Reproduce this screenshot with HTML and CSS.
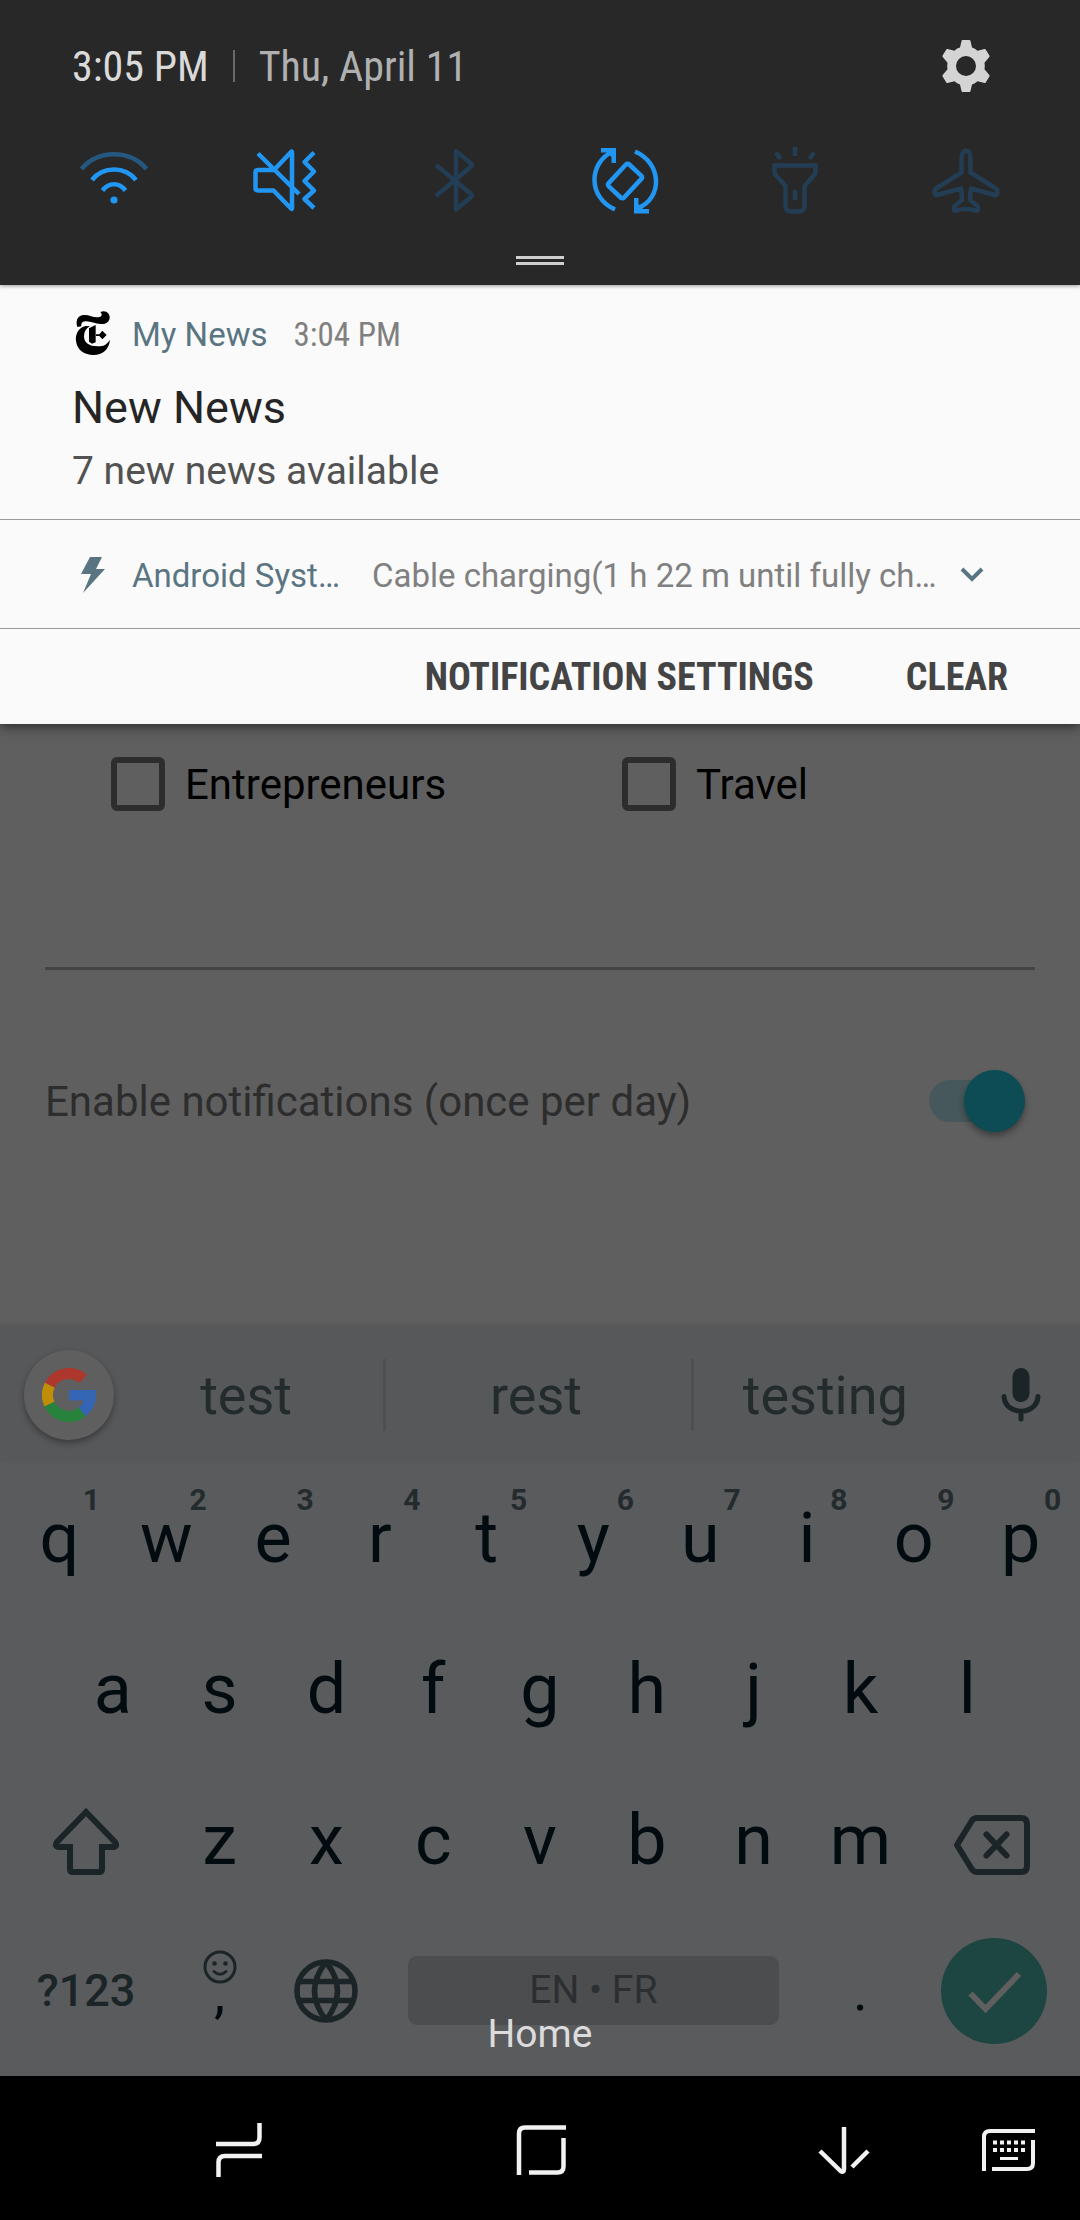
FILE: index.html
```html
<!DOCTYPE html>
<html lang="en">
<head>
<meta charset="utf-8">
<meta name="viewport" content="width=device-width, initial-scale=1">
<title>Notifications</title>
<link rel="stylesheet" href="styles.css">
</head>
<body>
<div class="screen">
  <section class="shade">
    <header class="quick-panel">
      <div class="status-row">
        <span class="clock">3:05 PM</span>
        <span class="status-divider"></span>
        <span class="date">Thu, April 11</span>
        <button class="gear" type="button" aria-label="Settings">
          <svg width="56" height="56" viewBox="0 0 56 56"><path fill="#d4d4d4" fill-rule="evenodd" d="M24.500 2h7q.8 0 1 1l1.500 6.500q3 1 5.500 3.200l7-1.700q.8-.2 1.200.5l3.700 6q.5.900-.1 1.600l-4.800 5.600q.6 3.300 0 6.600l4.800 5.600q.6.700.1 1.600l-3.700 6q-.4.700-1.200.5l-7-1.700q-2.500 2.200-5.500 3.200L32.500 53q-.2 1-1 1h-7q-.8 0-1-1L22 46.500q-3-1-5.500-3.200l-7 1.700q-.8.200-1.200-.5l-3.700-6q-.5-.9.100-1.600l4.800-5.600q-.6-3.300 0-6.600l-4.800-5.600q-.6-.7-.1-1.600l3.700-6q.4-.7 1.200-.5l7 1.700Q19 10 22 9.500L23.500 3q.2-1 1-1zM28 18a10 10 0 1 0 0 20a10 10 0 1 0 0-20z"/></svg>
        </button>
      </div>
      <div class="toggles">
        <button type="button" aria-label="Wi-Fi">
          <svg width="72" height="72" viewBox="0 0 72 72" fill="none" stroke="#2196f3" stroke-width="4.500"><path stroke="#245880" d="M3.500 25C20 5.400 52 5.400 68.500 25"/><path d="M14 36C25 22 47 22 58 36"/><path d="M24.500 46.500C31 38.300 41 38.300 47.500 46.500"/><circle cx="36" cy="56" r="3.600" fill="#2196f3" stroke="none"/></svg>
        </button>
        <button type="button" aria-label="Vibrate">
          <svg width="72" height="72" viewBox="0 0 72 72" fill="none" stroke="#2196f3" stroke-width="4.500" stroke-linejoin="round"><path d="M26 26H10Q7.500 26 7.500 28.500V44Q7.500 46.500 10 46.500H25.500L43 64.500Q44 65.500 44 64V8.500Q44 7 43 8L26 26M10 9.500L51 50"/><path d="M66 8.500L56.500 18L66 27.500L56.500 37L66 46.500L56.500 55L66 64"/></svg>
        </button>
        <button type="button" aria-label="Bluetooth">
          <svg width="72" height="72" viewBox="0 0 72 72" fill="none" stroke="#233d54" stroke-width="4.500" stroke-linejoin="round"><path d="M17 21L52 50Q54 51.500 52 53L37 65.500V7L52 19.500Q54 21 52 22.500L17 52"/></svg>
        </button>
        <button type="button" aria-label="Auto rotate">
          <svg width="72" height="72" viewBox="0 0 72 72" fill="none" stroke="#2196f3" stroke-width="4.500"><path d="M26 65.500C-2 53 0 18 24 7.500M46 7.500C73 19 74 54 49 64"/><path fill="#2196f3" stroke="none" d="M12 4H27V19H22.500V13L18 8.500H12zM45 69.500V54H49.500V60L54 65H60V69.500z"/><rect x="25.500" y="22" width="21" height="30" rx="2" transform="rotate(43 36 37)"/></svg>
        </button>
        <button type="button" aria-label="Flashlight">
          <svg width="72" height="72" viewBox="0 0 72 72" fill="none" stroke="#233d54" stroke-width="4.500"><path d="M15.500 21.500H56.500V29.500L45.500 42V61.500Q45.500 67.500 39.500 67.500H32.500Q26.500 67.500 26.500 61.500V42L15.500 29.500zM36 3V12M36 46V56M17 8.500L21.500 15M55 8.500L50.500 15"/></svg>
        </button>
        <button type="button" aria-label="Flight mode">
          <svg width="72" height="72" viewBox="0 0 72 72" fill="none" stroke="#233d54" stroke-width="4.500" stroke-linejoin="round"><path d="M36 6.500C31.500 7 31.500 13 31.500 16V28.500L6 44.500C4 46 4 52 7 51L31 44.500Q32 50 32 56L24.500 62Q22.500 67.500 26 66.500Q36 63.500 46 66.500Q49.500 67.500 47.500 62L40 56Q40 50 41 44.500L65 51C68 52 68 46 66 44.500L40.500 28.500V16C40.500 13 40.500 7 36 6.500z"/></svg>
        </button>
      </div>
      <div class="handle"></div>
    </header>

    <article class="notice">
      <div class="notice-head">
        <svg class="notice-icon" width="48" height="54" viewBox="0 0 144 162"><path d="M22 60C17 45 20 26 40 24C58 22 72 34 88 30C97 28 97 20 91 15C108 8 120 20 119 32C118 46 106 52 92 51C74 50 62 42 46 43C36 44 33 50 34 58zM46 57C24 62 16 84 18 102C21 130 44 144 70 144C98 144 118 126 120 98C110 114 98 119 82 118C58 118 42 108 42 88C42 74 48 64 60 58zM57 64L77 54V106L66 110L57 104zM97 71L110 84L97 97L88 87H78V82H88z"/></svg>
        <span class="app-name">My News</span>
        <span class="notice-time">3:04 PM</span>
      </div>
      <h2>New News</h2>
      <p>7 new news available</p>
    </article>
    <article class="notice-line">
      <svg class="notice-icon" width="48" height="54" viewBox="0 0 48 54"><path fill="#5a7582" d="M20 9H32L26 21H35L13 45L21 26H11z"/></svg>
      <span class="app-name">Android System</span>
      <span class="summary">Cable charging(1 h 22 m until fully charged)</span>
      <button type="button" aria-label="Expand"><svg width="28" height="20" viewBox="0 0 28 20" fill="none" stroke="#5a7582" stroke-width="4"><path d="M4 4L14 14L24 4"/></svg></button>
    </article>
    <footer class="shade-footer">
      <button type="button">NOTIFICATION SETTINGS</button>
      <button type="button">CLEAR</button>
    </footer>
  </section>

  <main class="app">
    <div class="topics">
      <label><input type="checkbox">Entrepreneurs</label>
      <label><input type="checkbox">Travel</label>
    </div>
    <hr>
    <label class="switch-row">Enable notifications (once per day)<input type="checkbox" role="switch" checked></label>
  </main>

  <section class="keyboard">
    <div class="strip">
      <button class="google" type="button" aria-label="Google">
        <svg width="54" height="54" viewBox="0 0 54 54" fill="none" stroke-width="11"><path stroke="#ad372c" d="M41.200 10.900A21.500 21.500 0 0 0 7.800 17.200"/><path stroke="#c08d08" d="M7.800 17.200A21.500 21.500 0 0 0 7.500 36.100"/><path stroke="#27833c" d="M7.500 36.100A21.500 21.500 0 0 0 40.200 43.900"/><path stroke="#3565b5" d="M40.200 43.900A21.500 21.500 0 0 0 48.500 27"/><path fill="#3565b5" d="M27 22H53.500Q54 24 54 27L48 32.500H27z"/></svg>
      </button>
      <div class="suggestions">
        <button type="button">test</button>
        <button type="button">rest</button>
        <button type="button">testing</button>
      </div>
      <button class="mic" type="button" aria-label="Voice input">
        <svg width="40" height="56" viewBox="0 0 40 56" fill="none" stroke="#1b2427" stroke-width="5" stroke-linecap="round"><rect x="11.500" y="1" width="17" height="34" rx="8.500" fill="#1b2427" stroke="none"/><path d="M3 29.500C4 49 36 49 37 29.500M20 45V52"/></svg>
      </button>
    </div>
    <div class="keys">
      <div class="row">
        <button type="button">q<sup>1</sup></button><button type="button">w<sup>2</sup></button><button type="button">e<sup>3</sup></button><button type="button">r<sup>4</sup></button><button type="button">t<sup>5</sup></button><button type="button">y<sup>6</sup></button><button type="button">u<sup>7</sup></button><button type="button">i<sup>8</sup></button><button type="button">o<sup>9</sup></button><button type="button">p<sup>0</sup></button>
      </div>
      <div class="row">
        <span class="half"></span><button type="button">a</button><button type="button">s</button><button type="button">d</button><button type="button">f</button><button type="button">g</button><button type="button">h</button><button type="button">j</button><button type="button">k</button><button type="button">l</button><span class="half"></span>
      </div>
      <div class="row">
        <button class="wide" type="button" aria-label="Shift"><svg width="72" height="72" viewBox="0 0 72 72" fill="none" stroke="#1b2427" stroke-width="6"><path d="M36 8L65 38Q68 43 63 43H52V65Q52 68 49 68H23Q20 68 20 65V43H9Q4 43 7 38z"/></svg></button><button type="button">z</button><button type="button">x</button><button type="button">c</button><button type="button">v</button><button type="button">b</button><button type="button">n</button><button type="button">m</button><button class="wide" type="button" aria-label="Backspace"><svg width="80" height="72" viewBox="2 -3 80 72" fill="none" stroke="#1b2427" stroke-width="6" stroke-linejoin="round"><path d="M5 38L20 13.500Q22 11 25 11H69Q75 11 75 17V59Q75 65 69 65H25Q22 65 20 62.500z"/><path stroke-linecap="round" d="M34.500 27.500L54.500 48.500M54.500 27.500L34.500 48.500"/></svg></button>
      </div>
      <div class="row">
        <button class="wide symbols" type="button">?123</button><button class="emoji-key" type="button"><svg width="34" height="34" viewBox="0 0 34 34" fill="none" stroke="#1b2427" stroke-width="3"><circle cx="17" cy="17" r="15"/><circle cx="11.500" cy="13.500" r="2.300" fill="#1b2427" stroke="none"/><circle cx="22.500" cy="13.500" r="2.300" fill="#1b2427" stroke="none"/><path stroke-linecap="round" d="M11 21.500Q17 27 23 21.500"/></svg>,</button><button type="button" aria-label="Language"><svg width="64" height="64" viewBox="0 0 64 64" fill="none" stroke="#1b2427" stroke-width="5.500"><circle cx="32" cy="32" r="29"/><path d="M4 22.500H60M4 41.500H60M32 3Q9 32 32 61M32 3Q55 32 32 61"/></svg></button><button class="space" type="button"><span>EN • FR</span></button><button class="period" type="button">.</button><button class="wide enter" type="button" aria-label="Done"><svg width="106" height="106" viewBox="0 0 106 106"><circle cx="53" cy="53" r="53" fill="#1d4541"/><path fill="none" stroke="#5f5f5f" stroke-width="6" d="M29.500 55.500L44.500 71L78 36"/></svg></button>
      </div>
    </div>
    <div class="hint">Home</div>
  </section>

  <nav class="navbar">
    <div class="nav-main">
      <button type="button" aria-label="Recents"><svg width="48" height="56" viewBox="0 0 48 56" fill="none" stroke="#f2f2f2" stroke-width="4.500"><path d="M1 22H38Q44.500 22 44.500 15.500V1M47 34H10Q3.500 34 3.500 40.500V55"/></svg></button>
      <button type="button" aria-label="Home"><svg width="50" height="52" viewBox="0 0 50 52" fill="none" stroke="#f2f2f2" stroke-width="4.500"><path d="M3 51V9.500Q3 3.500 9 3.500H50M47.500 14V42.500Q47.500 48.500 41.500 48.500H13"/></svg></button>
      <button type="button" aria-label="Back"><svg width="52" height="48" viewBox="0 0 52 48" fill="none" stroke="#f2f2f2" stroke-width="4.500" stroke-linejoin="round"><path d="M2 25L22.500 45Q26 47 26 43V1M50 25L34 41"/></svg></button>
    </div>
    <button type="button" aria-label="Change keyboard"><svg width="54" height="44" viewBox="0 0 54 44" fill="none" stroke="#f2f2f2" stroke-width="4"><path d="M3 43V9Q3 3 9 3H54M52 12V35Q52 41 46 41H11"/><path stroke-dasharray="4 3" d="M12 14.500H44M12 22H44"/><path stroke-width="3" d="M19 30.500H37"/></svg></button>
  </nav>
</div>
</body>
</html>
```
FILE: styles.css
```css
* { box-sizing: border-box; }
body { margin: 0; background: #000; font-family: Roboto, "Liberation Sans", sans-serif; }
button { display: flex; align-items: center; justify-content: center; margin: 0; padding: 0; border: 0; background: none; font: inherit; color: inherit; }
svg { display: block; flex: none; }
.screen { display: flex; flex-direction: column; min-height: 100vh; background: #5f5f5f; }

.shade { position: relative; background: #fafafa; box-shadow: 0 2px 12px rgba(0, 0, 0, .6); }
.quick-panel { padding: 36px 0 20px; background: #282828; box-shadow: 0 1px 4px rgba(0, 0, 0, .4); }
.status-row { display: flex; align-items: center; height: 60px; padding: 0 86px 0 72px; font-family: "Roboto Condensed", Roboto, sans-serif; font-size: 42px; color: #b0b0b0; }
.clock { color: #dadada; }
.status-divider { width: 2px; height: 32px; margin: 0 24px; background: #696969; }
.gear { margin-left: auto; }
.toggles { display: grid; grid-template-columns: repeat(6, 1fr); height: 160px; padding: 8px 29px 0; align-items: start; }
.toggles button { padding-top: 40px; }
.handle { width: 48px; height: 9px; margin: 0 auto; border: solid #cfcfcf; border-width: 3px 0; }

.notice { padding: 21px 72px 24px; border-bottom: 1px solid #9a9a9a; }
.notice-head { display: flex; align-items: center; height: 56px; font-size: 33px; }
.notice-icon { margin: 0 14px 0 -2px; }
.app-name { flex: none; color: #5a7582; }
.notice-time { margin-left: 26px; font-family: "Roboto Condensed", Roboto, sans-serif; color: #808080; }
.notice h2 { margin: 14px 0 0; font-size: 45px; font-weight: 400; line-height: 64px; color: #252525; }
.notice p { margin: 8px 0 0; font-size: 39px; line-height: 47px; color: #525252; }
.notice-line { display: flex; align-items: center; height: 109px; padding: 2px 94px 0 72px; border-bottom: 1px solid #9a9a9a; font-size: 33px; color: #808080; }
.notice-line .app-name, .summary { overflow: hidden; white-space: nowrap; text-overflow: ellipsis; }
.notice-line .app-name { width: 214px; margin-right: 26px; }
.summary { flex: 1; margin-right: 14px; }
.shade-footer { display: flex; justify-content: flex-end; gap: 92px; height: 95px; padding-right: 72px; font-family: "Roboto Condensed", Roboto, sans-serif; font-size: 38px; font-weight: 700; color: #444; }

.app { padding: 33px 45px 0; font-size: 42px; color: #2d2d2d; }
.topics { display: grid; grid-template-columns: 511px 1fr; padding: 0 66px; color: #000; }
.topics label { display: flex; align-items: center; gap: 20px; height: 54px; }
.topics input { appearance: none; width: 54px; height: 54px; margin: 0; border: 6px solid #2d2d2d; border-radius: 6px; }
.app hr { height: 3px; margin: 156px 0 100px; border: 0; background: #444; }
.switch-row { display: flex; align-items: center; justify-content: space-between; height: 62px; }
.switch-row input { position: relative; appearance: none; width: 96px; height: 42px; margin: 0 10px 0 0; border-radius: 21px; background: #46585b; }
.switch-row input::after { content: ""; position: absolute; top: -10px; right: 0; width: 61px; height: 62px; border-radius: 50%; background: #0e4c55; box-shadow: 0 4px 6px rgba(0, 0, 0, .35); }

.keyboard { position: relative; margin-top: auto; background: #5a5b5d; color: #020c10; }
.strip { display: flex; align-items: center; height: 135px; padding: 3px 0 0 24px; background: #57585a; box-shadow: 0 -1px 4px rgba(0, 0, 0, .1); color: #232b2d; }
.google { width: 90px; height: 90px; border-radius: 50%; background: #5f5f5f; box-shadow: 0 3px 6px rgba(0, 0, 0, .35); }
.suggestions { flex: 1; display: grid; grid-template-columns: 268fr 306fr 270fr; height: 72px; font-size: 54px; }
.suggestions button { padding-right: 5px; }
.suggestions button + button { border-left: 3px solid #4e4f51; }
.mic { width: 118px; }
.keys { padding: 1px 6px 10px; font-size: 70px; }
.row { display: flex; height: 151px; }
.row button { position: relative; flex: 2 1 0; }
.row .half { flex: 1 1 0; }
.row .wide { flex-grow: 3; }
sup { position: absolute; top: 18px; left: 50%; width: 64px; font-size: 30px; line-height: 40px; font-weight: 700; text-align: center; color: #232b2d; }
.row .symbols { font-size: 45px; font-weight: 500; color: #1b2427; }
.row .emoji-key { flex-direction: column; justify-content: flex-start; padding-top: 35px; font-size: 56px; line-height: 18px; }
.row .period { font-size: 56px; }
.row .space { flex-grow: 8; font-size: 39px; color: #2b2f31; }
.space span { flex: 1; margin: 0 28px; border-radius: 9px; background: #4c4d4f; line-height: 69px; }
.hint { position: absolute; right: 0; bottom: 18px; left: 0; font-size: 39px; line-height: 48px; text-align: center; color: #dcdcdc; }

.navbar { display: flex; align-items: center; height: 144px; padding: 4px 45px 0 215px; background: #000; }
.nav-main { flex: 1; display: flex; align-items: center; justify-content: space-between; margin-right: 111px; }
```
